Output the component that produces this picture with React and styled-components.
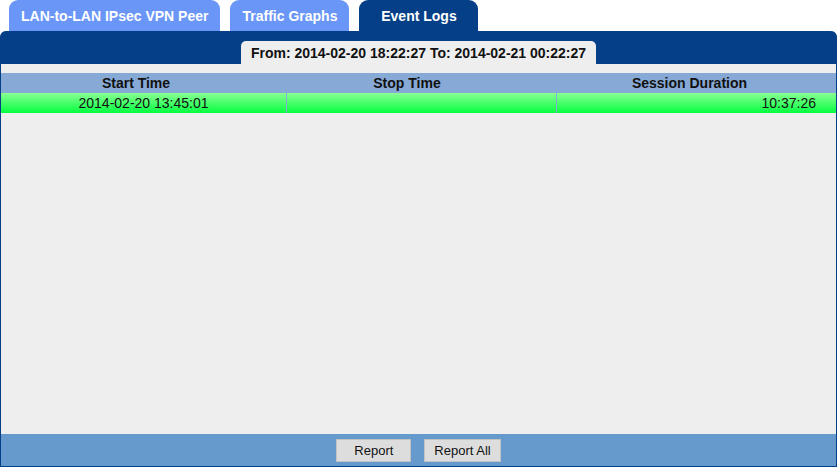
import React from "react";
import styled, { createGlobalStyle } from "styled-components";

const Global = createGlobalStyle`
  html, body { margin: 0; padding: 0; background: #ffffff; }
  body { font-family: "Liberation Sans", Arial, sans-serif; }
`;

const Page = styled.div`
  width: 837px;
  height: 467px;
  display: flex;
  flex-direction: column;
  box-sizing: border-box;
`;

const TabBar = styled.div`
  display: flex;
  gap: 10px;
  padding-left: 9px;
  height: 31px;
`;

const Tab = styled.div`
  height: 31px;
  min-width: 119px;
  box-sizing: border-box;
  padding: 1px 12px 0;
  border-radius: 9px 9px 0 0;
  background: ${(p) => (p.$active ? "#043f87" : "#6a96f7")};
  color: #ffffff;
  font: bold 14px "Liberation Sans", Arial, sans-serif;
  display: flex;
  align-items: center;
  justify-content: center;
`;

const Panel = styled.div`
  flex: 1;
  display: flex;
  flex-direction: column;
  background: #043f87;
  border-radius: 6px 6px 0 0;
  border: 1px solid #043f87;
  border-top: none;
  overflow: hidden;
`;

const Band = styled.div`
  height: 33px;
  display: flex;
  justify-content: center;
  align-items: flex-end;
`;

const RangeTab = styled.div`
  height: 23px;
  padding: 0 10px;
  box-sizing: border-box;
  background: #eeeeee;
  border-radius: 5px 5px 0 0;
  font: bold 14px "Liberation Sans", Arial, sans-serif;
  color: #111111;
  display: flex;
  align-items: center;
`;

const Body = styled.div`
  flex: 1;
  background: #eeeeee;
  padding-top: 9px;
  font: 14px "Liberation Sans", Arial, sans-serif;
  color: #111111;
`;

const HeadRow = styled.div`
  display: grid;
  grid-template-columns: 270px 272px 1fr;
  height: 20px;
  background: #87a9d5;
  font-weight: bold;
`;

const HeadCell = styled.div`
  display: flex;
  align-items: center;
  justify-content: center;
`;

const DataRow = styled.div`
  display: grid;
  grid-template-columns: 285px 1px 269px 1px 1fr;
  height: 20px;
  background: linear-gradient(#8aff94, #04ff3f);
`;

const Cell = styled.div`
  display: flex;
  align-items: center;
  justify-content: ${(p) => (p.$align === "right" ? "flex-end" : "center")};
  padding-right: ${(p) => (p.$align === "right" ? "20px" : "0")};
`;

const Divider = styled.div`
  background: #87a9d5;
`;

const Footer = styled.div`
  height: 32px;
  background: #6699cc;
  display: flex;
  justify-content: center;
  align-items: center;
  gap: 13px;
`;

const Button = styled.button`
  height: 23px;
  min-width: 75px;
  padding: 0 9px;
  box-sizing: border-box;
  background: #dddddd;
  border: 1px solid #c2c2c2;
  font: 13px "Liberation Sans", Arial, sans-serif;
  color: #111111;
  border-radius: 0;
`;

export default function App() {
  return (
    <Page>
      <Global />
      <TabBar>
        <Tab>LAN-to-LAN IPsec VPN Peer</Tab>
        <Tab>Traffic Graphs</Tab>
        <Tab $active>Event Logs</Tab>
      </TabBar>
      <Panel>
        <Band>
          <RangeTab>From: 2014-02-20 18:22:27 To: 2014-02-21 00:22:27</RangeTab>
        </Band>
        <Body>
          <HeadRow>
            <HeadCell>Start Time</HeadCell>
            <HeadCell>Stop Time</HeadCell>
            <HeadCell>Session Duration</HeadCell>
          </HeadRow>
          <DataRow>
            <Cell>2014-02-20 13:45:01</Cell>
            <Divider />
            <Cell />
            <Divider />
            <Cell $align="right">10:37:26</Cell>
          </DataRow>
        </Body>
        <Footer>
          <Button>Report</Button>
          <Button>Report All</Button>
        </Footer>
      </Panel>
    </Page>
  );
}
